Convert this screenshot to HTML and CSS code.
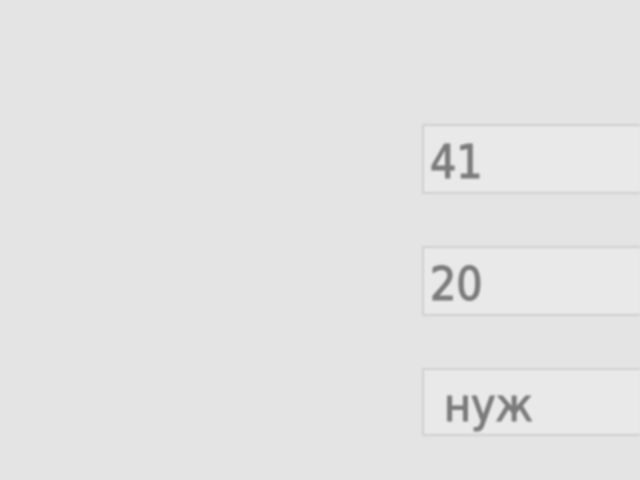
FILE: index.html
```html
<!DOCTYPE html>
<html lang="ru">
<head>
<meta charset="utf-8">
<title>Анкета</title>
<link rel="stylesheet" href="styles.css">
</head>
<body>
  <form class="form">
    <div class="field">41</div>
    <div class="field">20</div>
    <div class="field field-select">нуж</div>
  </form>
</body>
</html>
```

FILE: styles.css
```css
html, body {
  margin: 0;
  height: 100%;
  overflow: hidden;
  background: #e4e4e4;
}

.form {
  display: flex;
  flex-direction: column;
  gap: 52px;
  padding: 124px 0 0 422px;
  filter: blur(0.8px);
}

/* fields continue past the right edge of the window, so no right border */
.field {
  box-sizing: border-box;
  width: 218px;
  height: 70px;
  display: flex;
  align-items: center;
  padding: 5px 0 0 6px;
  border: 2px solid #cfcfcf;
  border-right: 0;
  background: #e9e9e9;
  font-family: "DejaVu Sans Condensed", "DejaVu Sans", sans-serif;
  font-size: 46px;
  color: #7b7b7b;
  -webkit-text-stroke: 1.2px #7b7b7b;
}

.field-select {
  height: 68px;
  padding-left: 20px;
}
```
